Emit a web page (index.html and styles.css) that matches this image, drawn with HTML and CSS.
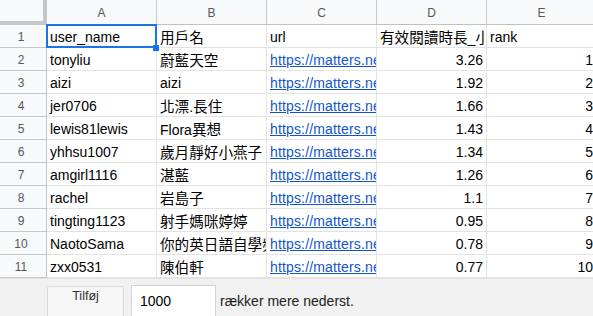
FILE: index.html
```html
<!DOCTYPE html>
<html lang="da">
<head>
<meta charset="utf-8">
<title>Sheet</title>
<link rel="stylesheet" href="styles.css">
</head>
<body>
<div class="sheet">
  <div class="grid">
    <div class="corner"></div>
    <div class="colhead">A</div>
    <div class="colhead">B</div>
    <div class="colhead">C</div>
    <div class="colhead">D</div>
    <div class="colhead">E</div>

    <div class="rowhead">1</div>
    <div class="cell selected"><span>user_name</span><div class="sel-frame"></div><div class="sel-handle"></div></div>
    <div class="cell"><span class="c">用戶名</span></div>
    <div class="cell">url</div>
    <div class="cell"><span class="c">有效閱讀時長</span>_<span class="c">小時</span></div>
    <div class="cell">rank</div>

    <div class="rowhead">2</div>
    <div class="cell">tonyliu</div>
    <div class="cell"><span class="c">蔚藍天空</span></div>
    <div class="cell link"><a href="#">https://matters.news/@tonyliu</a></div>
    <div class="cell num">3.26</div>
    <div class="cell num">1</div>

    <div class="rowhead">3</div>
    <div class="cell">aizi</div>
    <div class="cell">aizi</div>
    <div class="cell link"><a href="#">https://matters.news/@aizi</a></div>
    <div class="cell num">1.92</div>
    <div class="cell num">2</div>

    <div class="rowhead">4</div>
    <div class="cell">jer0706</div>
    <div class="cell"><span class="c">北漂</span>.<span class="c">長住</span></div>
    <div class="cell link"><a href="#">https://matters.news/@jer0706</a></div>
    <div class="cell num">1.66</div>
    <div class="cell num">3</div>

    <div class="rowhead">5</div>
    <div class="cell">lewis81lewis</div>
    <div class="cell">Flora<span class="c">異想</span></div>
    <div class="cell link"><a href="#">https://matters.news/@lewis81lewis</a></div>
    <div class="cell num">1.43</div>
    <div class="cell num">4</div>

    <div class="rowhead">6</div>
    <div class="cell">yhhsu1007</div>
    <div class="cell"><span class="c">歲月靜好小燕子</span></div>
    <div class="cell link"><a href="#">https://matters.news/@yhhsu1007</a></div>
    <div class="cell num">1.34</div>
    <div class="cell num">5</div>

    <div class="rowhead">7</div>
    <div class="cell">amgirl1116</div>
    <div class="cell"><span class="c">湛藍</span></div>
    <div class="cell link"><a href="#">https://matters.news/@amgirl1116</a></div>
    <div class="cell num">1.26</div>
    <div class="cell num">6</div>

    <div class="rowhead">8</div>
    <div class="cell">rachel</div>
    <div class="cell"><span class="c">岩島子</span></div>
    <div class="cell link"><a href="#">https://matters.news/@rachel</a></div>
    <div class="cell num">1.1</div>
    <div class="cell num">7</div>

    <div class="rowhead">9</div>
    <div class="cell">tingting1123</div>
    <div class="cell"><span class="c">射手媽咪婷婷</span></div>
    <div class="cell link"><a href="#">https://matters.news/@tingting1123</a></div>
    <div class="cell num">0.95</div>
    <div class="cell num">8</div>

    <div class="rowhead">10</div>
    <div class="cell">NaotoSama</div>
    <div class="cell"><span class="c">你的英日語自學頻道</span></div>
    <div class="cell link"><a href="#">https://matters.news/@NaotoSama</a></div>
    <div class="cell num">0.78</div>
    <div class="cell num">9</div>

    <div class="rowhead">11</div>
    <div class="cell">zxx0531</div>
    <div class="cell"><span class="c">陳伯軒</span></div>
    <div class="cell link"><a href="#">https://matters.news/@zxx0531</a></div>
    <div class="cell num">0.77</div>
    <div class="cell num">10</div>
  </div>

  <div class="addbar">
    <div class="add-btn">Tilføj</div>
    <div class="add-input">1000</div>
    <div class="add-text">rækker mere nederst.</div>
  </div>
</div>
</body>
</html>
```

FILE: styles.css
```css
html, body {
  margin: 0;
  padding: 0;
  background: #ffffff;
  overflow: hidden;
}

.sheet {
  width: 593px;
  height: 316px;
  overflow: hidden;
  font-family: "Liberation Sans", Arial, "Noto Sans CJK TC", sans-serif;
  font-size: 14px;
  color: #000;
}

.grid {
  display: grid;
  grid-template-columns: 47px repeat(5, 110px);
  grid-template-rows: 25px repeat(11, 23px);
  width: 597px;
}

.corner {
  background: #f8f9fa;
  border-right: 4px solid #c4c7c5;
  border-bottom: 4px solid #c4c7c5;
  box-sizing: border-box;
}

.colhead {
  background: #f8f9fa;
  border-right: 1px solid #c7c7c7;
  border-bottom: 1px solid #c0c0c0;
  box-sizing: border-box;
  display: flex;
  align-items: center;
  justify-content: center;
  font-size: 12px;
  color: #575757;
  padding-top: 1px;
}

.rowhead {
  background: #f8f9fa;
  border-right: 1px solid #c0c0c0;
  border-bottom: 1px solid #c7c7c7;
  box-sizing: border-box;
  display: flex;
  align-items: center;
  justify-content: center;
  padding-right: 4px;
  padding-top: 1px;
  font-size: 12px;
  color: #575757;
}

.cell {
  position: relative;
  border-right: 1px solid #e2e3e3;
  border-bottom: 1px solid #e2e3e3;
  box-sizing: border-box;
  display: block;
  padding: 4px 3px 0 3px;
  line-height: 16px;
  white-space: nowrap;
  overflow: hidden;
}

.cell .c {
  font-family: "Noto Sans CJK TC", sans-serif;
  font-size: 14.6px;
  line-height: 16px;
}

.cell.num {
  text-align: right;
}

.cell.link a {
  color: #1155cc;
  text-decoration: underline;
  letter-spacing: 0.15px;
}

.cell.selected {
  overflow: visible;
  z-index: 2;
}

.sel-frame {
  position: absolute;
  left: -1px;
  top: -1px;
  right: -1px;
  bottom: -1px;
  border: 2px solid #1a73e8;
  pointer-events: none;
}

.sel-handle {
  position: absolute;
  left: 106px;
  top: 20px;
  width: 6px;
  height: 6px;
  background: #1a73e8;
}

.addbar {
  display: flex;
  align-items: flex-start;
  height: 38px;
  background: #f1f1f1;
  border-top: 1px solid #e2e3e3;
  box-sizing: border-box;
  padding-left: 47px;
  overflow: hidden;
}

.add-btn {
  margin-top: 7px;
  width: 77px;
  height: 40px;
  box-sizing: border-box;
  background: #f6f6f6;
  border: 1px solid #dadada;
  border-radius: 2px;
  text-align: center;
  font-size: 12.5px;
  line-height: 14px;
  padding-top: 2px;
  color: #333;
}

.add-input {
  margin-top: 6px;
  margin-left: 7px;
  width: 85px;
  height: 40px;
  box-sizing: border-box;
  background: #fff;
  border: 1px solid #d4d4d4;
  padding: 7px 0 0 8px;
  line-height: 16px;
  font-size: 14px;
  color: #000;
}

.add-text {
  margin-left: 4px;
  margin-top: 14px;
  line-height: 16px;
  font-size: 14px;
  color: #222;
}
```
